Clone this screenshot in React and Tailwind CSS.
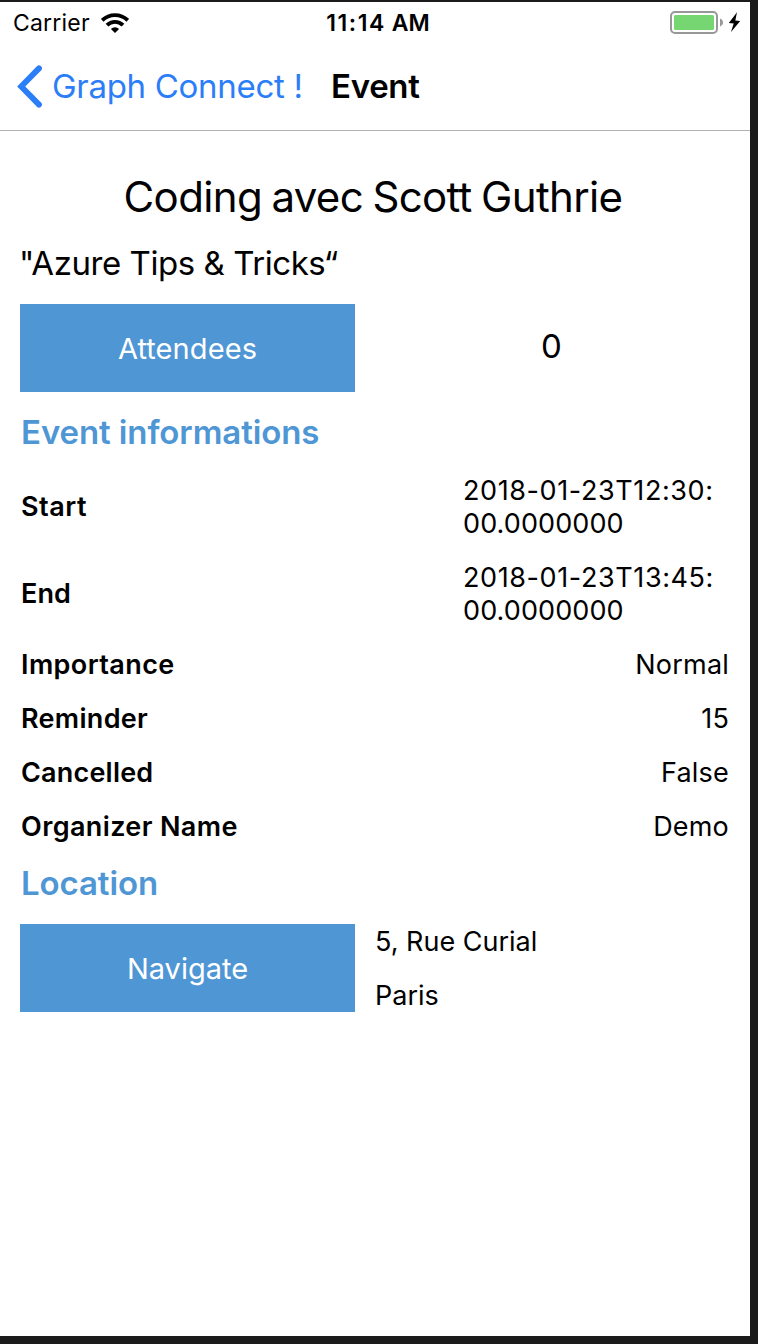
function WifiIcon() {
  return (
    <svg width="28" height="20" viewBox="0 0 28 20" fill="none" stroke="#000" strokeWidth="3.9">
      <path d="M1.2 7.3 A18.3 18.3 0 0 1 26.8 7.3" />
      <path d="M6 12.1 A11.5 11.5 0 0 1 22 12.1" />
      <path d="M9.9 16 A5.9 5.9 0 0 1 18.1 16 L14 20 Z" fill="#000" stroke="none" />
    </svg>
  );
}

function BatteryIcon() {
  return (
    <svg width="70" height="24" viewBox="0 0 70 24">
      <rect x="1" y="1" width="46" height="21" rx="4" fill="#fff" stroke="#98989b" strokeWidth="2" />
      <rect x="4" y="4" width="40" height="15" rx="1.5" fill="#76d672" />
      <path d="M50 7.5 C52 8.2 53 9.8 53 11.5 C53 13.2 52 14.8 50 15.5 Z" fill="#98989b" />
      <path d="M67 1.2 L58.8 12 L63.7 12.4 L61 21 L70.2 10 L65.3 9.4 Z" fill="#000" />
    </svg>
  );
}

function StatusBar() {
  return (
    <div className="grid h-[42px] grid-cols-3 items-center pl-[13px] pr-[10px] text-[23px]">
      <div className="flex items-center gap-[11px] tracking-[0.2px]">
        <span>Carrier</span>
        <WifiIcon />
      </div>
      <div className="pl-[3px] text-center font-semibold whitespace-pre">
        <span className="tracking-[1.6px]">11:14</span> AM
      </div>
      <div className="flex justify-end">
        <BatteryIcon />
      </div>
    </div>
  );
}

function NavBar() {
  return (
    <div className="flex h-[87px] items-center border-b border-[#b2b2b2] pl-[17px] text-[33px] tracking-[-0.3px]">
      <svg width="26" height="44" viewBox="0 0 26 44" fill="none" stroke="#2c7ef8" strokeWidth="5.8" strokeLinecap="round" strokeLinejoin="miter">
        <path d="M22 3.4 L4.2 21.5 L22 39.6" />
      </svg>
      <span className="ml-[9px] w-[279px] text-[#2c7ef8]">Graph Connect !</span>
      <span className="font-semibold">Event</span>
    </div>
  );
}

function BlueButton({ children }) {
  return (
    <button className="h-[88px] w-[335px] bg-[#4f96d5] pt-[2px] text-[29px] text-white">{children}</button>
  );
}

function SectionTitle({ children }) {
  return (
    <h2 className="h-[41px] pl-px text-[33px] leading-[41px] font-semibold tracking-[-0.1px] text-[#4f96d5]">{children}</h2>
  );
}

function DateRow({ label, labelClass, date, rest }) {
  return (
    <div className="flex h-[67px] items-center justify-between">
      <span className={`pt-[2px] pl-px font-semibold ${labelClass}`}>{label}</span>
      <span className="w-[268px] pl-px leading-[33px]">
        <span className="block tracking-[0.6px]">{date}</span>
        <span className="block tracking-[0.1px]">{rest}</span>
      </span>
    </div>
  );
}

function InfoRow({ label, labelClass, value }) {
  return (
    <div className="flex h-[34px] items-center justify-between pt-[2px] pr-px pl-px">
      <span className={`font-semibold ${labelClass}`}>{label}</span>
      <span className="tracking-[0.2px]">{value}</span>
    </div>
  );
}

export default function App() {
  return (
    <div className="h-[1344px] w-[758px] bg-[#1b1b1b] pt-[2px] pr-[8px] pb-[8px] font-[Inter,sans-serif] text-black">
      <div className="h-full bg-white">
        <StatusBar />
        <NavBar />
        <main className="flex flex-col gap-[20px] px-[20px] pt-[40px] text-[27px]">
          <h1 className="h-[52px] pr-1 text-center text-[42px] leading-[52px] tracking-[-0.65px] [word-spacing:-1.8px]">Coding avec Scott Guthrie</h1>
          <p className="-ml-px h-[41px] text-[33px] leading-[41px] tracking-[-0.44px]">"Azure Tips &amp; Tricks“</p>
          <div className="flex gap-[20px]">
            <BlueButton>
              <span className="tracking-[0.1px]">Attendees</span>
            </BlueButton>
            <div className="h-[84px] flex-1 pr-[2px] text-center text-[33px] leading-[84px]">0</div>
          </div>
          <SectionTitle>Event informations</SectionTitle>
          <DateRow label="Start" labelClass="tracking-[0.5px]" date="2018-01-23T12:30:" rest="00.0000000" />
          <DateRow label="End" labelClass="tracking-[0.1px]" date="2018-01-23T13:45:" rest="00.0000000" />
          <InfoRow label="Importance" labelClass="tracking-[0.4px]" value="Normal" />
          <InfoRow label="Reminder" labelClass="tracking-[0.3px]" value="15" />
          <InfoRow label="Cancelled" labelClass="tracking-[0.2px]" value="False" />
          <InfoRow label="Organizer Name" labelClass="tracking-[0.38px]" value="Demo" />
          <SectionTitle>Location</SectionTitle>
          <div className="flex gap-[20px]">
            <BlueButton>Navigate</BlueButton>
            <div className="flex flex-1 flex-col gap-[20px] pt-px leading-[34px]">
              <span>5, Rue Curial</span>
              <span>Paris</span>
            </div>
          </div>
        </main>
      </div>
    </div>
  );
}
